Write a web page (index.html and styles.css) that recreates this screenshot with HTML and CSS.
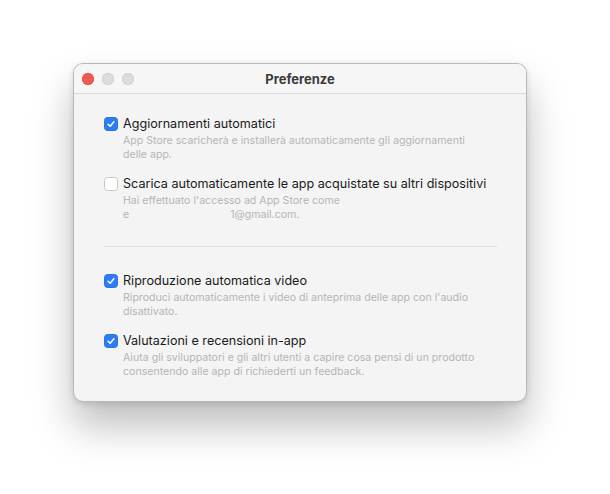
FILE: index.html
```html
<!DOCTYPE html>
<html>
<head>
    <title>Preferenze</title>
    <link rel="stylesheet" href="styles.css">
</head>
<body>
    <div class="stage">
        <div class="window">
            <div class="titlebar">
                <div class="lights">
                    <span class="light red"></span>
                    <span class="light"></span>
                    <span class="light"></span>
                </div>
                <div class="title">Preferenze</div>
            </div>

            <div class="content">
                <div class="option">
                    <span class="check on">
                        <svg viewBox="0 0 14 14" width="14" height="14"><polyline points="3.6,7.3 6,9.6 10.4,4.4" fill="none" stroke="white" stroke-width="1.8" stroke-linecap="round" stroke-linejoin="round"/></svg>
                    </span>
                    <div class="text">
                        <div class="label">Aggiornamenti automatici</div>
                        <div class="desc">App Store scaricherà e installerà automaticamente gli aggiornamenti<br>delle app.</div>
                    </div>
                </div>

                <div class="option">
                    <span class="check"></span>
                    <div class="text">
                        <div class="label">Scarica automaticamente le app acquistate su altri dispositivi</div>
                        <div class="desc">Hai effettuato l'accesso ad App Store come<br>e<span class="gap"></span>1@gmail.com.</div>
                    </div>
                </div>

                <div class="divider"></div>

                <div class="option">
                    <span class="check on">
                        <svg viewBox="0 0 14 14" width="14" height="14"><polyline points="3.6,7.3 6,9.6 10.4,4.4" fill="none" stroke="white" stroke-width="1.8" stroke-linecap="round" stroke-linejoin="round"/></svg>
                    </span>
                    <div class="text">
                        <div class="label">Riproduzione automatica video</div>
                        <div class="desc">Riproduci automaticamente i video di anteprima delle app con l'audio<br>disattivato.</div>
                    </div>
                </div>

                <div class="option">
                    <span class="check on">
                        <svg viewBox="0 0 14 14" width="14" height="14"><polyline points="3.6,7.3 6,9.6 10.4,4.4" fill="none" stroke="white" stroke-width="1.8" stroke-linecap="round" stroke-linejoin="round"/></svg>
                    </span>
                    <div class="text">
                        <div class="label">Valutazioni e recensioni in-app</div>
                        <div class="desc">Aiuta gli sviluppatori e gli altri utenti a capire cosa pensi di un prodotto<br>consentendo alle app di richiederti un feedback.</div>
                    </div>
                </div>
            </div>
        </div>
    </div>
</body>
</html>
```

FILE: styles.css
```css
body {
    margin: 0;
    padding: 0;
    background-color: #ffffff;
    font-family: Inter, 'Noto Sans', sans-serif;
    color: #222;
}

.stage {
    padding: 63px 0 0 73px;
    min-height: 494px;
    box-sizing: border-box;
}

.window {
    width: 454px;
    height: 339px;
    box-sizing: border-box;
    background-color: #f4f4f4;
    border: 1px solid #b8b8b8;
    border-radius: 10px;
    box-shadow: 0 24px 40px rgba(0,0,0,0.26), 0 2px 6px rgba(0,0,0,0.12);
    overflow: hidden;
}

.titlebar {
    height: 29px;
    border-bottom: 1px solid #dcdcdc;
    background-color: #f6f6f6;
    display: flex;
    align-items: center;
    position: relative;
}

.lights {
    display: flex;
    gap: 8px;
    padding-left: 8px;
}

.light {
    width: 12px;
    height: 12px;
    border-radius: 50%;
    background-color: #dcdcdc;
    box-shadow: inset 0 0 0 0.5px #c4c4c4;
}

.light.red {
    background-color: #ee5b52;
    box-shadow: inset 0 0 0 0.5px #d6453d;
}

.title {
    position: absolute;
    left: 0;
    right: 0;
    text-align: center;
    font-size: 13px;
    font-weight: 700;
    color: #3a3a3a;
    pointer-events: none;
}

.content {
    padding: 22px 29px 0 30px;
}

.option {
    display: flex;
    align-items: flex-start;
    gap: 5px;
    margin-bottom: 14px;
}

.check {
    flex: none;
    width: 14px;
    height: 14px;
    margin-top: 1px;
    border-radius: 3.5px;
    background-color: #fff;
    border: 1px solid #c8c8c8;
    box-sizing: border-box;
    display: flex;
    align-items: center;
    justify-content: center;
}

.check.on {
    background-color: #2c7df4;
    border-color: #2a73e0;
}

.check svg {
    width: 14px;
    height: 14px;
}

.label {
    font-size: 12.6px;
    line-height: 16px;
    color: #1a1a1a;
    white-space: nowrap;
}

.desc {
    margin-top: 2px;
    font-size: 10.6px;
    line-height: 14px;
    color: #b4b4b4;
    white-space: nowrap;
}

.gap {
    display: inline-block;
    width: 101px;
}

.divider {
    height: 1px;
    background-color: #dedede;
    margin: 24px 0 26px 0;
}
```
